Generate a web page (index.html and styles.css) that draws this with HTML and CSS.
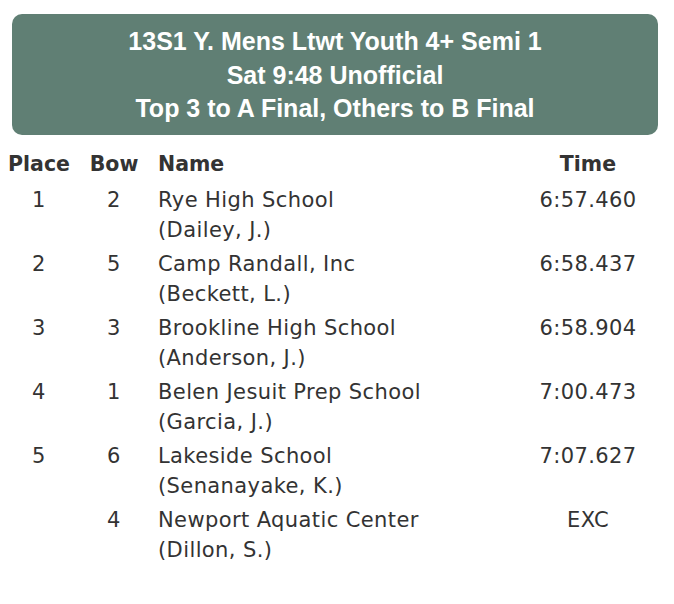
FILE: index.html
```html
<!DOCTYPE html>
<html lang="en">
<head>
<meta charset="utf-8">
<title>13S1 Y. Mens Ltwt Youth 4+ Semi 1</title>
<link rel="stylesheet" href="styles.css">
</head>
<body>
<div class="race-header">
  <div>13S1 Y. Mens Ltwt Youth 4+ Semi 1</div>
  <div>Sat 9:48 Unofficial</div>
  <div>Top 3 to A Final, Others to B Final</div>
</div>
<table class="results">
  <colgroup>
    <col class="c-place">
    <col class="c-bow">
    <col class="c-name">
    <col class="c-time">
  </colgroup>
  <thead>
    <tr><th class="center">Place</th><th class="center">Bow</th><th class="left">Name</th><th class="center">Time</th></tr>
  </thead>
  <tbody>
    <tr><td class="center">1</td><td class="center">2</td><td class="left">Rye High School<br>(Dailey, J.)</td><td class="center">6:57.460</td></tr>
    <tr><td class="center">2</td><td class="center">5</td><td class="left">Camp Randall, Inc<br>(Beckett, L.)</td><td class="center">6:58.437</td></tr>
    <tr><td class="center">3</td><td class="center">3</td><td class="left">Brookline High School<br>(Anderson, J.)</td><td class="center">6:58.904</td></tr>
    <tr><td class="center">4</td><td class="center">1</td><td class="left">Belen Jesuit Prep School<br>(Garcia, J.)</td><td class="center">7:00.473</td></tr>
    <tr><td class="center">5</td><td class="center">6</td><td class="left">Lakeside School<br>(Senanayake, K.)</td><td class="center">7:07.627</td></tr>
    <tr><td class="center"></td><td class="center">4</td><td class="left">Newport Aquatic Center<br>(Dillon, S.)</td><td class="center">EXC</td></tr>
  </tbody>
</table>
</body>
</html>
```
FILE: styles.css
```css
html, body {
  background: #ffffff;
}
body {
  margin: 0;
  padding: 14px 8px 0 8px;
}
.race-header {
  margin: 0 8px 0 4px;
  background: #607f74;
  color: #ffffff;
  border-radius: 10px;
  padding: 11px 8px 9px 8px;
  text-align: center;
  font-family: "Liberation Sans", Arial, sans-serif;
  font-weight: bold;
  font-size: 25px;
  line-height: 33.5px;
}
.results {
  margin-top: 12px;
  width: 658px;
  table-layout: fixed;
  border-collapse: collapse;
  font-family: "DejaVu Sans", Verdana, sans-serif;
  font-size: 21px;
  letter-spacing: 0.4px;
  line-height: 30px;
  color: #333333;
}
.c-place { width: 62px; }
.c-bow { width: 88px; }
.c-name { width: 352px; }
.c-time { width: 156px; }
.results th,
.results td {
  padding: 2px 0;
  vertical-align: top;
  white-space: nowrap;
}
.results th {
  font-weight: bold;
  font-size: 20.5px;
  letter-spacing: 0;
  padding: 2px 0 4px 0;
}
.center { text-align: center; }
.left { text-align: left; }
```
